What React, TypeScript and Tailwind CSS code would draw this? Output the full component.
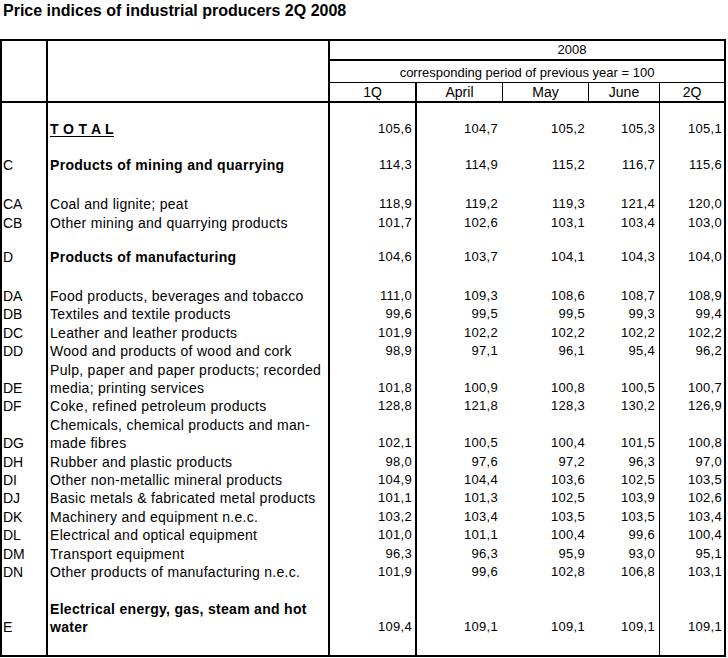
import React from "react";

type Row = {
  code?: string;
  desc?: string;
  bold?: boolean;
  total?: boolean;
  up?: boolean;
  vals?: string[];
};

const rows: Row[] = [
  {},
  { desc: "T O T A L", bold: true, total: true, up: true, vals: ["105,6", "104,7", "105,2", "105,3", "105,1"] },
  {},
  { code: "C", desc: "Products of mining and quarrying", bold: true, up: true, vals: ["114,3", "114,9", "115,2", "116,7", "115,6"] },
  {},
  { code: "CA", desc: "Coal and lignite; peat", vals: ["118,9", "119,2", "119,3", "121,4", "120,0"] },
  { code: "CB", desc: "Other mining and quarrying products", vals: ["101,7", "102,6", "103,1", "103,4", "103,0"] },
  {},
  { code: "D", desc: "Products of manufacturing", bold: true, up: true, vals: ["104,6", "103,7", "104,1", "104,3", "104,0"] },
  {},
  { code: "DA", desc: "Food products, beverages and tobacco", vals: ["111,0", "109,3", "108,6", "108,7", "108,9"] },
  { code: "DB", desc: "Textiles and textile products", vals: ["99,6", "99,5", "99,5", "99,3", "99,4"] },
  { code: "DC", desc: "Leather and leather products", vals: ["101,9", "102,2", "102,2", "102,2", "102,2"] },
  { code: "DD", desc: "Wood and products of wood and cork", vals: ["98,9", "97,1", "96,1", "95,4", "96,2"] },
  { desc: "Pulp, paper and paper products; recorded" },
  { code: "DE", desc: "media; printing services", vals: ["101,8", "100,9", "100,8", "100,5", "100,7"] },
  { code: "DF", desc: "Coke, refined petroleum products", vals: ["128,8", "121,8", "128,3", "130,2", "126,9"] },
  { desc: "Chemicals, chemical products and man-" },
  { code: "DG", desc: "made fibres", vals: ["102,1", "100,5", "100,4", "101,5", "100,8"] },
  { code: "DH", desc: "Rubber and plastic products", vals: ["98,0", "97,6", "97,2", "96,3", "97,0"] },
  { code: "DI", desc: "Other non-metallic mineral products", vals: ["104,9", "104,4", "103,6", "102,5", "103,5"] },
  { code: "DJ", desc: "Basic metals & fabricated metal products", vals: ["101,1", "101,3", "102,5", "103,9", "102,6"] },
  { code: "DK", desc: "Machinery and equipment n.e.c.", vals: ["103,2", "103,4", "103,5", "103,5", "103,4"] },
  { code: "DL", desc: "Electrical and optical equipment", vals: ["101,0", "101,1", "100,4", "99,6", "100,4"] },
  { code: "DM", desc: "Transport equipment", vals: ["96,3", "96,3", "95,9", "93,0", "95,1"] },
  { code: "DN", desc: "Other products of manufacturing n.e.c.", vals: ["101,9", "99,6", "102,8", "106,8", "103,1"] },
  {},
  { desc: "Electrical energy, gas, steam and hot", bold: true },
  { code: "E", desc: "water", bold: true, vals: ["109,4", "109,1", "109,1", "109,1", "109,1"] },
  {},
];

function Num({ v, cls, up }: { v?: string; cls: string; up?: boolean }) {
  return (
    <div
      className={`flex h-full items-center justify-end text-[13px] tracking-[0.3px] ${up ? "pb-[4px]" : ""} ${cls}`}
    >
      {v ?? ""}
    </div>
  );
}

export default function App() {
  return (
    <div className="w-[728px] h-[658px] bg-white text-black font-['Liberation_Sans',Arial,sans-serif] overflow-hidden">
      <div className="h-[39px] pl-[3px] pt-[1px] text-[16px] font-bold leading-[20px]">
        Price indices of industrial producers 2Q 2008
      </div>
      <div className="w-[726px] border-2 border-black">
        {/* header */}
        <div className="flex h-[62px] border-b-2 border-black">
          <div className="w-[44px]" />
          <div className="w-[282px] border-l-2 border-black" />
          <div className="w-[396px] border-l-2 border-black flex flex-col text-[13px]">
            <div className="h-[20px] border-b-2 border-black flex items-center justify-center pl-[90px] leading-[18px]">
              2008
            </div>
            <div className="h-[22px] border-b border-black flex items-end justify-center leading-[18px]">
              corresponding period of previous year = 100
            </div>
            <div className="h-[18px] flex text-[14px] leading-[18px]">
              <div className="w-[85px] flex items-center justify-center">1Q</div>
              <div className="w-[87px] border-l-2 border-black flex items-center justify-center">April</div>
              <div className="w-[86px] border-l border-black flex items-center justify-center">May</div>
              <div className="w-[71px] border-l border-black flex items-center justify-center">June</div>
              <div className="w-[65px] border-l border-black flex items-center justify-center">2Q</div>
            </div>
          </div>
        </div>
        {/* body */}
        <div className="flex flex-col">
          {rows.map((r, i) => (
            <div key={i} className="flex h-[18.4px] leading-[18px]">
              <div className={`w-[44px] flex items-center pl-[1px] text-[14px] ${r.up ? "pb-[4px]" : ""}`}>
                {r.code ?? ""}
              </div>
              <div
                className={`w-[282px] border-l-2 border-black flex items-center pl-[2px] whitespace-nowrap ${
                  r.up ? "pb-[4px]" : ""
                } ${r.bold ? "font-bold text-[14px] tracking-[0.3px]" : "text-[14px] tracking-[0.3px]"}`}
              >
                {r.total ? <span className="underline underline-offset-2">{r.desc}</span> : r.desc ?? ""}
              </div>
              <div className="w-[87px] border-l-2 border-black">
                <Num v={r.vals?.[0]} cls="pr-[3px]" up={r.up} />
              </div>
              <div className="w-[87px] border-l-2 border-black">
                <Num v={r.vals?.[1]} cls="pr-[4px]" up={r.up} />
              </div>
              <div className="w-[86px]">
                <Num v={r.vals?.[2]} cls="pr-[3px]" up={r.up} />
              </div>
              <div className="w-[71px]">
                <Num v={r.vals?.[3]} cls="pr-[4px]" up={r.up} />
              </div>
              <div className="w-[65px] border-l border-black">
                <Num v={r.vals?.[4]} cls="pr-[2px]" up={r.up} />
              </div>
            </div>
          ))}
        </div>
      </div>
    </div>
  );
}
